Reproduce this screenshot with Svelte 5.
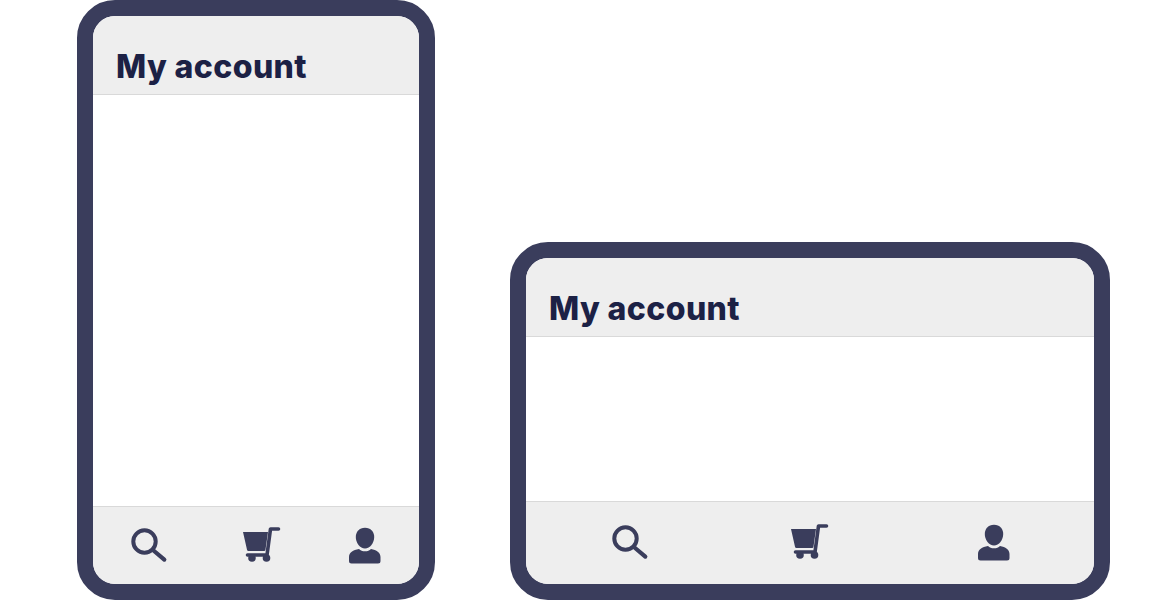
<script>
	const frames = ["portrait", "landscape"];
</script>

<div class="page">
	{#each frames as frame}
		<section class="phone {frame}">
			<header class="title-bar">
				<h1>My account</h1>
			</header>
			<main class="content"></main>
			<nav class="tab-bar">
				<svg class="icon" viewBox="0 0 40 40" aria-label="Search">
					<circle cx="16.5" cy="16.5" r="11.2" fill="none" stroke="currentColor" stroke-width="4" />
					<path d="M25.5 25.5 L36.3 34.6" fill="none" stroke="currentColor" stroke-width="4.2" stroke-linecap="round" />
				</svg>
				<svg class="icon" viewBox="0 0 40 40" aria-label="Cart">
					<path d="M2 7 H27 L24.5 24.5 a1.5 1.5 0 0 1 -1.5 1.5 H7.5 a1.5 1.5 0 0 1 -1.5 -1.2 Z" fill="currentColor" />
					<path d="M37.5 4 H29.5 L26 30 H6.5" fill="none" stroke="currentColor" stroke-width="3.6" stroke-linecap="round" stroke-linejoin="round" />
					<circle cx="11" cy="33" r="3.8" fill="currentColor" />
					<circle cx="25.5" cy="33" r="3.8" fill="currentColor" />
				</svg>
				<svg class="icon" viewBox="0 0 40 40" aria-label="Account">
					<path d="M20 2.8 C25.8 2.8 29.2 7 29.2 12 C29.2 18 25 23.5 20 23.5 C15 23.5 10.8 18 10.8 12 C10.8 7 14.2 2.8 20 2.8 Z" fill="currentColor" />
					<path d="M4 36 V32 C4 27.5 8 25 14 24 C15.5 25.8 17.5 26.3 20 26.3 C22.5 26.3 24.5 25.8 26 24 C31.5 25 35.5 27.5 35.5 32 V36 a2.5 2.5 0 0 1 -2.5 2.5 H6.5 A2.5 2.5 0 0 1 4 36 Z" fill="currentColor" />
				</svg>
			</nav>
		</section>
	{/each}
</div>

<style>
	:global(body) {
		background: #fff;
		overflow: hidden;
	}
	.page {
		display: flex;
		align-items: flex-end;
		gap: 75px;
		height: 600px;
		padding-left: 77px;
	}
	.phone {
		display: flex;
		flex-direction: column;
		box-sizing: border-box;
		border: 16px solid #3a3d5c;
		border-radius: 38px;
		background: #fff;
		overflow: hidden;
	}
	.portrait {
		width: 358px;
		height: 600px;
	}
	.landscape {
		width: 600px;
		height: 358px;
	}
	.title-bar {
		box-sizing: border-box;
		height: 79px;
		padding: 32px 0 0 23px;
		background: #eeeeee;
		border-bottom: 1px solid #d9d9d9;
	}
	h1 {
		margin: 0;
		color: #1c2145;
		font-family: Inter, "Open Sans", sans-serif;
		font-size: 32px;
		font-weight: 800;
		line-height: 38px;
		letter-spacing: 0.4px;
		white-space: nowrap;
	}
	.content {
		flex: 1;
	}
	.tab-bar {
		display: grid;
		box-sizing: border-box;
		background: #eeeeee;
		border-top: 1px solid #d9d9d9;
		color: #3a3d5c;
	}
	.portrait .tab-bar {
		grid-template-columns: 113px 104px 40px;
		height: 78px;
		padding: 18px 0 0 35px;
	}
	.landscape .tab-bar {
		grid-template-columns: 180px 185px 40px;
		height: 83px;
		padding: 20px 0 0 83px;
	}
	.icon {
		display: block;
		width: 40px;
		height: 40px;
	}
</style>
